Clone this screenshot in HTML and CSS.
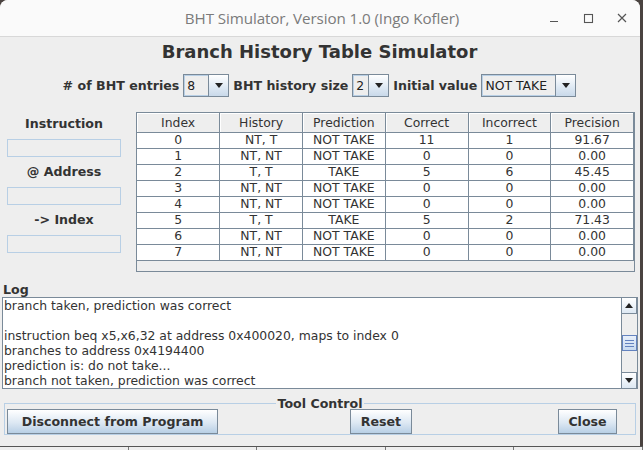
FILE: index.html
```html
<!DOCTYPE html>
<html>
<head>
<meta charset="utf-8">
<link rel="stylesheet" href="styles.css">
</head>
<body>
<div class="desktop">
  <div class="window">
    <div class="titlebar">
      <span class="title">BHT Simulator, Version 1.0 (Ingo Kofler)</span>
      <div class="wctrls">
        <svg width="12" height="12" viewBox="0 0 12 12"><path d="M2 9.5h8" stroke="#555" stroke-width="1.2"/></svg>
        <svg width="12" height="12" viewBox="0 0 12 12"><rect x="2.5" y="2.5" width="8" height="8" fill="none" stroke="#555" stroke-width="1.1"/></svg>
        <svg width="12" height="12" viewBox="0 0 12 12"><path d="M2 2l8 8M10 2l-8 8" stroke="#555" stroke-width="1.2"/></svg>
      </div>
    </div>
    <div class="content">
      <h1 class="heading">Branch History Table Simulator</h1>
      <div class="controls">
        <span class="lbl"># of BHT entries</span>
        <div class="combo w45"><span class="cval">8</span><span class="carrow"><i></i></span></div>
        <span class="lbl">BHT history size</span>
        <div class="combo w36"><span class="cval">2</span><span class="carrow"><i></i></span></div>
        <span class="lbl">Initial value</span>
        <div class="combo w94"><span class="cval">NOT TAKE</span><span class="carrow"><i></i></span></div>
      </div>
      <div class="middle">
        <div class="leftpanel">
          <div class="flabel">Instruction</div>
          <div class="field"></div>
          <div class="flabel">@ Address</div>
          <div class="field"></div>
          <div class="flabel">-&gt; Index</div>
          <div class="field"></div>
        </div>
        <div class="tablepane">
          <table class="bht">
            <thead>
              <tr><th>Index</th><th>History</th><th>Prediction</th><th>Correct</th><th>Incorrect</th><th>Precision</th></tr>
            </thead>
            <tbody>
              <tr><td>0</td><td>NT, T</td><td>NOT TAKE</td><td>11</td><td>1</td><td>91.67</td></tr>
              <tr><td>1</td><td>NT, NT</td><td>NOT TAKE</td><td>0</td><td>0</td><td>0.00</td></tr>
              <tr><td>2</td><td>T, T</td><td>TAKE</td><td>5</td><td>6</td><td>45.45</td></tr>
              <tr><td>3</td><td>NT, NT</td><td>NOT TAKE</td><td>0</td><td>0</td><td>0.00</td></tr>
              <tr><td>4</td><td>NT, NT</td><td>NOT TAKE</td><td>0</td><td>0</td><td>0.00</td></tr>
              <tr><td>5</td><td>T, T</td><td>TAKE</td><td>5</td><td>2</td><td>71.43</td></tr>
              <tr><td>6</td><td>NT, NT</td><td>NOT TAKE</td><td>0</td><td>0</td><td>0.00</td></tr>
              <tr><td>7</td><td>NT, NT</td><td>NOT TAKE</td><td>0</td><td>0</td><td>0.00</td></tr>
            </tbody>
          </table>
        </div>
      </div>
      <div class="loglabel">Log</div>
      <div class="logbox">
        <div class="logtext">
          <div>branch taken, prediction was correct</div>
          <div>&nbsp;</div>
          <div>instruction beq x5,x6,32 at address 0x400020, maps to index 0</div>
          <div>branches to address 0x4194400</div>
          <div>prediction is: do not take...</div>
          <div>branch not taken, prediction was correct</div>
        </div>
        <div class="vscroll">
          <div class="sbtn"><i class="up"></i></div>
          <div class="track">
            <div class="thumb"><b></b><b></b><b></b></div>
          </div>
          <div class="sbtn"><i class="down"></i></div>
        </div>
      </div>
      <fieldset class="toolctl">
        <legend>Tool Control</legend>
        <button class="btn b-disc">Disconnect from Program</button>
        <button class="btn b-reset">Reset</button>
        <button class="btn b-close">Close</button>
      </fieldset>
    </div>
  </div>
  <div class="under">
    <span></span><span></span><span></span><span></span><span></span>
  </div>
</div>
</body>
</html>
```

FILE: styles.css
```css
* { box-sizing: border-box; }
html, body { margin: 0; padding: 0; }
body {
  width: 643px;
  height: 450px;
  overflow: hidden;
  background: #3a3a3a;
  font-family: "DejaVu Sans", sans-serif;
  font-size: 12.4px;
  color: #333;
}
.desktop { position: relative; width: 643px; height: 450px; background: #4a4340; }
.window {
  width: 640px;
  height: 446px;
  background: #eeeeee;
  border-radius: 8px 8px 0 0;
  overflow: hidden;
  display: flex;
  flex-direction: column;
}
.titlebar {
  height: 37px;
  flex: none;
  background: #fafafa;
  border-bottom: 1px solid #d8d8d8;
  display: flex;
  align-items: center;
  justify-content: center;
  position: relative;
}
.title {
  font-family: "Open Sans", "Noto Sans", sans-serif;
  font-size: 15.2px;
  color: #7b7b7b;
  letter-spacing: -0.1px;
  margin-left: 4px;
}
.wctrls {
  position: absolute;
  right: 12px;
  top: 12px;
  display: flex;
  gap: 22px;
}
.content {
  flex: 1;
  display: flex;
  flex-direction: column;
  padding: 0 3px 0 2px;
}
.heading {
  margin: 3px 0 0 0;
  text-align: center;
  font-size: 18px;
  font-weight: bold;
  color: #333;
  line-height: 24px;
  height: 25px;
}
.controls {
  margin-top: 8px;
  display: flex;
  justify-content: center;
  align-items: center;
  gap: 4px;
  height: 24px;
  padding-left: 0;
}
.lbl { font-weight: bold; font-size: 12.6px; color: #333; }
.combo {
  height: 23px;
  border: 1px solid #7a8a99;
  display: flex;
  background: #fff;
}
.w45 { width: 46px; }
.w36 { width: 37px; }
.w94 { width: 95px; }
.cval {
  flex: 1;
  border: 1px solid #b8cfe5;
  border-right: none;
  background: #eeeeee;
  display: flex;
  align-items: center;
  padding-left: 2px;
  font-size: 12.4px;
  color: #222;
}
.carrow {
  width: 20px;
  border-left: 1px solid #7a8a99;
  background: linear-gradient(#ffffff, #dde8f3 60%, #c9d9ea);
  display: flex;
  align-items: center;
  justify-content: center;
}
.carrow i {
  width: 0; height: 0;
  border-left: 4.5px solid transparent;
  border-right: 4.5px solid transparent;
  border-top: 5px solid #222;
}
.middle {
  margin-top: 15px;
  display: flex;
  height: 160px;
}
.leftpanel {
  width: 134px;
  padding: 3px 15px 0 5px;
  display: flex;
  flex-direction: column;
  align-items: stretch;
}
.flabel {
  height: 18px;
  line-height: 18px;
  text-align: center;
  font-weight: bold;
  font-size: 12.6px;
  color: #333;
  margin-bottom: 6px;
}
.field {
  height: 18px;
  border: 1px solid #b8cfe5;
  background: #eeeeee;
  margin-bottom: 6px;
}
.tablepane {
  width: 499px;
  height: 160px;
  border: 1px solid #7a8a99;
  background: #eeeeee;
}
.bht {
  border-collapse: collapse;
  width: 497px;
  table-layout: fixed;
  font-size: 12.4px;
}
.bht th {
  height: 19px;
  font-weight: normal;
  background: #eeeeee;
  border: 1px solid #7a8a99;
  border-top: none;
  padding: 0;
  color: #333;
  box-shadow: inset 1px 1px 0 #fff;
}
.bht th:first-child { border-left: none; }
.bht td {
  height: 16px;
  padding: 0;
  text-align: center;
  background: #fff;
  border: 1px solid #7a8a99;
  color: #333;
  line-height: 14px;
}
.bht td:first-child { border-left: none; }
.loglabel {
  margin-top: 10px;
  font-weight: bold;
  font-size: 12.6px;
  padding-left: 1px;
  height: 15px;
  line-height: 15px;
}
.logbox {
  margin-top: 0;
  height: 92px;
  border: 1px solid #7a8a99;
  background: #fff;
  display: flex;
  width: 636px;
}
.logtext {
  flex: 1;
  padding: 0 0 0 1px;
  font-size: 12.4px;
  line-height: 15px;
  color: #333;
  overflow: hidden;
  white-space: nowrap;
}
.vscroll {
  width: 16px;
  display: flex;
  flex-direction: column;
  background: #eeeeee;
  border-left: 1px solid #7a8a99;
}
.sbtn {
  height: 16px;
  background: linear-gradient(#ffffff, #dde8f3);
  border: 1px solid #7a8a99;
  border-left: none;
  display: flex;
  align-items: center;
  justify-content: center;
}
.sbtn:first-child { border-top: none; }
.sbtn:last-child { border-bottom: none; }
.sbtn i { width: 0; height: 0; border-left: 4.5px solid transparent; border-right: 4.5px solid transparent; }
.sbtn i.up { border-bottom: 5px solid #222; }
.sbtn i.down { border-top: 5px solid #222; }
.track {
  flex: 1;
  padding-top: 21px;
}
.thumb {
  height: 16px;
  background: linear-gradient(#e8effa, #c8daf0);
  border: 1px solid #6382bf;
  display: flex;
  flex-direction: column;
  justify-content: center;
  align-items: center;
  gap: 2px;
}
.thumb b { display: block; width: 9px; height: 1px; background: #6382bf; }
.toolctl {
  margin: 7px 0 0 2px;
  width: 632px;
  height: 39px;
  border: 1px solid #b8cfe5;
  padding: 0 2px;
  display: flex;
  align-items: center;
  position: relative;
}
.toolctl legend {
  margin: 0 auto;
  padding: 0 2px;
  font-weight: bold;
  font-size: 12.6px;
  color: #333;
}
.btn {
  height: 25px;
  font-family: "DejaVu Sans", sans-serif;
  font-weight: bold;
  font-size: 12.6px;
  color: #333;
  border: 1px solid #7a8a99;
  background: linear-gradient(#ffffff, #dde8f3 55%, #b8cfe5);
  padding: 0;
  margin-top: -2px;
}
.b-disc { width: 211px; }
.b-reset { width: 62px; margin-left: 132px; }
.b-close { width: 59px; margin-left: 146px; }
.under {
  height: 4px;
  background: #eeeeee;
  border-top: 1px solid #555;
  display: flex;
}
.under span { width: 152px; border-right: 1px solid #777; }
```
